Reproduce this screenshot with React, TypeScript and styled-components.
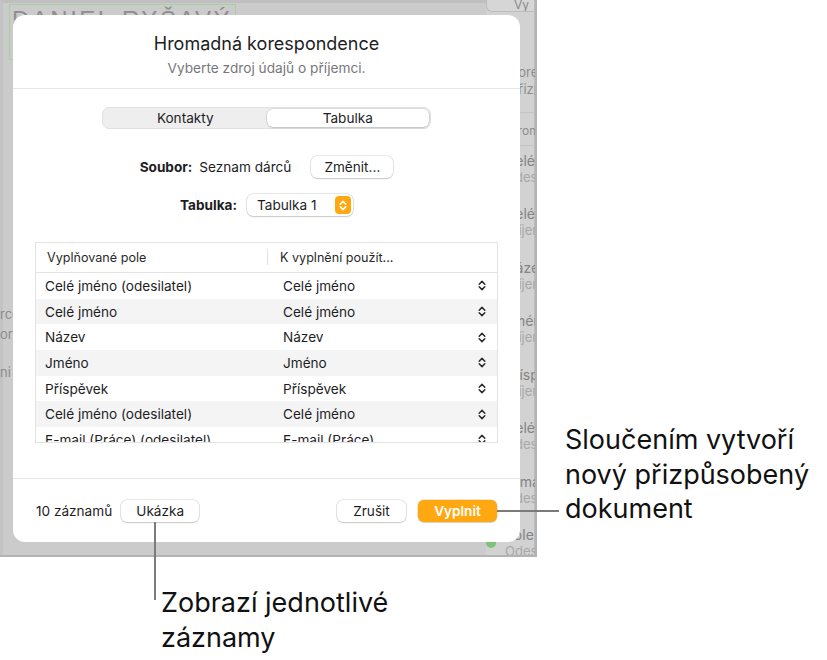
import React from "react";
import styled, { createGlobalStyle } from "styled-components";

const GlobalStyle = createGlobalStyle`
  html, body { margin: 0; padding: 0; background: #ffffff; }
  body { font-family: Inter, "Noto Sans", sans-serif; color: #1d1d1f; -webkit-font-smoothing: antialiased; }
  * { box-sizing: border-box; }
`;

const Root = styled.div`
  position: relative;
  width: 827px;
  height: 660px;
  overflow: hidden;
  background: #ffffff;
`;

const TopRow = styled.div`
  display: flex;
  align-items: flex-start;
`;

const Frame = styled.div`
  position: relative;
  flex: none;
  width: 537px;
  height: 557px;
  overflow: hidden;
  background: #cbcbcb;
  border-right: 2px solid #b3b3b3;
  border-bottom: 2px solid #b3b3b3;
`;

const BackApp = styled.div`
  display: grid;
  grid-template-columns: 1fr 49px;
  height: 100%;
  border-top: 3px solid #bfbfbf;
  border-left: 3px solid #c3c3c3;
`;

const Canvas = styled.div`
  display: flex;
  flex-direction: column;
  padding: 1px 0 0 6px;
`;

const NameBox = styled.div`
  width: 227px;
  height: 56px;
  border: 1px solid #a6cfa0;
  padding: 0 0 0 2px;
  font-family: "Liberation Sans", Arial, sans-serif;
  font-size: 24px;
  letter-spacing: 2.5px;
  line-height: 30px;
  color: #8e8e8e;
  white-space: nowrap;
  overflow: hidden;
`;

const DocLines = styled.div`
  margin: 247px 0 0 -9px;
  display: flex;
  flex-direction: column;
  gap: 6px;
  font-size: 13px;
  line-height: 14px;
  color: #8c8c8c;
`;

const DocLine = styled.div<{ $gap?: number }>`
  margin-top: ${(p) => p.$gap ?? 0}px;
  white-space: nowrap;
`;

const Sidebar = styled.div`
  display: flex;
  flex-direction: column;
  background: #d2d2d2;
  margin-top: -3px;
  border-right: 1px solid #bdbdbd;
`;

const SideTab = styled.div`
  height: 12px;
  background: #d6d6d6;
  border-left: 1px solid #bcbcbc;
  border-bottom: 1px solid #bcbcbc;
  border-bottom-left-radius: 6px;
  padding-left: 27px;
  font-size: 12px;
  line-height: 10px;
  color: #8a8a8a;
  overflow: hidden;
`;

const SideHead = styled.div`
  padding: 52px 0 14px 24px;
  font-size: 13px;
  line-height: 17px;
  color: #8c8c8c;
  white-space: nowrap;
  border-bottom: 1px solid #c4c4c4;
`;

const SideSection = styled.div`
  padding: 10px 0 7px 24px;
  font-size: 12px;
  line-height: 15px;
  color: #8c8c8c;
  white-space: nowrap;
  border-bottom: 1px solid #c4c4c4;
`;

const SideList = styled.div`
  display: flex;
  flex-direction: column;
  margin-top: -4px;
`;

const SideItem = styled.div`
  display: grid;
  grid-template-columns: 10px 1fr;
  column-gap: 9px;
  align-items: center;
  align-content: center;
  height: 53.5px;
  white-space: nowrap;
`;

const SideDot = styled.span<{ $color: string }>`
  width: 10px;
  height: 10px;
  border-radius: 50%;
  background: ${(p) => p.$color};
  grid-row: span 2;
`;

const SideTitle = styled.div`
  font-size: 14px;
  line-height: 17px;
  color: #848484;
`;

const SideSub = styled.div`
  font-size: 13px;
  line-height: 17px;
  color: #a8a8a8;
`;

const Dialog = styled.div`
  position: absolute;
  left: 13px;
  top: 15px;
  width: 507px;
  height: 527px;
  background: #ffffff;
  border-radius: 12px;
  display: flex;
  flex-direction: column;
  overflow: hidden;
`;

const Header = styled.div`
  padding: 17px 0 11px;
  text-align: center;
  border-bottom: 1px solid #e6e6e6;
`;

const Title = styled.div`
  font-size: 18px;
  line-height: 23px;
  color: #1d1d1f;
`;

const Subtitle = styled.div`
  margin-top: 5px;
  font-size: 13.7px;
  line-height: 17px;
  color: #77777b;
`;

const Body = styled.div`
  flex: 1;
  display: flex;
  flex-direction: column;
  align-items: center;
  padding: 18px 22px 0;
`;

const Segmented = styled.div`
  display: grid;
  grid-template-columns: 1fr 1fr;
  width: 329px;
  height: 22px;
  padding: 1px;
  border-radius: 7px;
  background: #eeeeef;
  border: 0.5px solid #e1e1e3;
`;

const Segment = styled.div<{ $active?: boolean }>`
  display: flex;
  align-items: center;
  justify-content: center;
  font-size: 13.6px;
  color: #1d1d1f;
  border-radius: 6px;
  background: ${(p) => (p.$active ? "#ffffff" : "transparent")};
  box-shadow: ${(p) =>
    p.$active ? "0 0 0 0.5px rgba(0,0,0,0.14), 0 1px 2px rgba(0,0,0,0.12)" : "none"};
`;

const FieldRow = styled.div<{ $top: number }>`
  display: flex;
  align-items: center;
  margin-top: ${(p) => p.$top}px;
  font-size: 13.6px;
`;

const Label = styled.span`
  font-weight: 700;
  color: #1d1d1f;
`;

const Value = styled.span`
  margin-left: 7px;
  color: #1d1d1f;
`;

const Button = styled.button<{ $primary?: boolean; $w: number }>`
  display: inline-flex;
  align-items: center;
  justify-content: center;
  width: ${(p) => p.$w}px;
  height: 22px;
  padding: 0;
  border: none;
  border-radius: 6px;
  font-family: inherit;
  font-size: 13.6px;
  font-weight: ${(p) => (p.$primary ? 600 : 400)};
  color: ${(p) => (p.$primary ? "#ffffff" : "#1d1d1f")};
  background: ${(p) => (p.$primary ? "#ffa812" : "#ffffff")};
  box-shadow: ${(p) =>
    p.$primary
      ? "0 0 0 0.5px rgba(200,120,0,0.4), 0 1px 1px rgba(0,0,0,0.1)"
      : "0 0 0 0.5px rgba(0,0,0,0.18), 0 1px 1.5px rgba(0,0,0,0.14)"};
`;

const Select = styled.div`
  display: flex;
  align-items: center;
  justify-content: space-between;
  width: 106px;
  height: 22px;
  margin-left: 10px;
  padding: 0 2px 0 10px;
  border-radius: 6px;
  background: #ffffff;
  box-shadow: 0 0 0 0.5px rgba(0,0,0,0.18), 0 1px 1.5px rgba(0,0,0,0.14);
  font-size: 13.6px;
`;

const Stepper = styled.span`
  display: flex;
  align-items: center;
  justify-content: center;
  width: 16px;
  height: 18px;
  border-radius: 4px;
  background: #ffa812;
`;

const Table = styled.div`
  align-self: stretch;
  margin-top: 26px;
  height: 201px;
  border: 1px solid #e3e3e3;
  overflow: hidden;
`;

const HeadRow = styled.div`
  display: grid;
  grid-template-columns: 232px 1fr;
  height: 30px;
  border-bottom: 1px solid #e3e3e3;
  font-size: 12.6px;
  color: #2a2a2a;
`;

const HeadCell = styled.div<{ $pad: number; $sep?: boolean }>`
  position: relative;
  display: flex;
  align-items: center;
  padding-left: ${(p) => p.$pad}px;
  &::before {
    content: "";
    display: ${(p) => (p.$sep ? "block" : "none")};
    position: absolute;
    left: -1px;
    top: 6px;
    width: 1px;
    height: 16px;
    background: #e0e0e0;
  }
`;

const Row = styled.div<{ $striped?: boolean }>`
  display: grid;
  grid-template-columns: 232px 1fr;
  height: 25.7px;
  align-items: center;
  font-size: 13.6px;
  color: #1d1d1f;
  background: ${(p) => (p.$striped ? "#f4f4f5" : "#ffffff")};
  white-space: nowrap;
`;

const Cell = styled.div`
  padding-left: 9px;
`;

const PopCell = styled.div`
  display: flex;
  align-items: center;
  justify-content: space-between;
  padding: 0 11px 0 15px;
`;

const Footer = styled.div`
  display: flex;
  align-items: center;
  height: 64px;
  padding: 0 23px;
  border-top: 1px solid #e6e6e6;
  font-size: 13.6px;
`;

const Count = styled.span`
  margin-right: 9px;
  color: #1d1d1f;
`;

const Spacer = styled.div`
  flex: 1;
`;

const ButtonGap = styled.div`
  width: 12px;
`;

const RightNote = styled.div`
  margin: 423px 0 0 28px;
  font-size: 27px;
  line-height: 34.5px;
  color: #111111;
  white-space: nowrap;
`;

const BottomNote = styled.div`
  margin: 29px 0 0 161px;
  font-size: 27px;
  line-height: 34.5px;
  color: #111111;
`;

const Leader = styled.div<{ $x: number; $y: number; $w: number; $h: number }>`
  position: absolute;
  left: ${(p) => p.$x}px;
  top: ${(p) => p.$y}px;
  width: ${(p) => p.$w}px;
  height: ${(p) => p.$h}px;
  background: #7b7b7b;
`;

const UpDown: React.FC<{ color: string; w?: number; h?: number; sw?: number }> = ({
  color,
  w = 8,
  h = 11,
  sw = 1.5,
}) => (
  <svg width={w} height={h} viewBox="0 0 8 11" fill="none">
    <path d="M1.2 4.2 L4 1.4 L6.8 4.2" stroke={color} strokeWidth={sw} strokeLinecap="round" strokeLinejoin="round" />
    <path d="M1.2 6.8 L4 9.6 L6.8 6.8" stroke={color} strokeWidth={sw} strokeLinecap="round" strokeLinejoin="round" />
  </svg>
);

const rows: [string, string][] = [
  ["Celé jméno (odesilatel)", "Celé jméno"],
  ["Celé jméno", "Celé jméno"],
  ["Název", "Název"],
  ["Jméno", "Jméno"],
  ["Příspěvek", "Příspěvek"],
  ["Celé jméno (odesilatel)", "Celé jméno"],
  ["E-mail (Práce) (odesilatel)", "E-mail (Práce)"],
];

const sideItems: [string, string, string][] = [
  ["Celé jméno", "Odesilatel", "transparent"],
  ["Celé jméno", "Příjemce", "transparent"],
  ["Název", "Příjemce", "transparent"],
  ["Jméno", "Příjemce", "transparent"],
  ["Příspěvek", "Příjemce", "transparent"],
  ["Celé jméno", "Odesilatel", "transparent"],
  ["E-mail", "Odesilatel", "transparent"],
  ["Pole", "Odesilatel", "#7cc47a"],
];

export default function App() {
  return (
    <Root>
      <GlobalStyle />
      <TopRow>
        <Frame>
          <BackApp>
            <Canvas>
              <NameBox>DANIEL RYŠAVÝ</NameBox>
              <DocLines>
                <DocLine>rce</DocLine>
                <DocLine>ory</DocLine>
                <DocLine $gap={18}>ni ı</DocLine>
              </DocLines>
            </Canvas>
            <Sidebar>
              <SideTab>Vy</SideTab>
              <SideHead>
                Korespondence
                <br />
                Přizpůsobit
              </SideHead>
              <SideSection>Proměnné</SideSection>
              <SideList>
                {sideItems.map(([t, s, c], i) => (
                  <SideItem key={i}>
                    <SideDot $color={c} />
                    <SideTitle>{t}</SideTitle>
                    <SideSub>{s}</SideSub>
                  </SideItem>
                ))}
              </SideList>
            </Sidebar>
          </BackApp>

          <Dialog>
            <Header>
              <Title>Hromadná korespondence</Title>
              <Subtitle>Vyberte zdroj údajů o příjemci.</Subtitle>
            </Header>
            <Body>
              <Segmented>
                <Segment>Kontakty</Segment>
                <Segment $active>Tabulka</Segment>
              </Segmented>
              <FieldRow $top={27}>
                <Label>Soubor:</Label>
                <Value>Seznam dárců</Value>
                <Button $w={82} style={{ marginLeft: 20 }}>
                  Změnit...
                </Button>
              </FieldRow>
              <FieldRow $top={16}>
                <Label>Tabulka:</Label>
                <Select>
                  <span>Tabulka 1</span>
                  <Stepper>
                    <UpDown color="#ffffff" w={8} h={11} sw={1.6} />
                  </Stepper>
                </Select>
              </FieldRow>
              <Table>
                <HeadRow>
                  <HeadCell $pad={11}>Vyplňované pole</HeadCell>
                  <HeadCell $pad={12} $sep>
                    K vyplnění použít...
                  </HeadCell>
                </HeadRow>
                {rows.map(([a, b], i) => (
                  <Row key={i} $striped={i % 2 === 1}>
                    <Cell>{a}</Cell>
                    <PopCell>
                      <span>{b}</span>
                      <UpDown color="#2b2b2b" />
                    </PopCell>
                  </Row>
                ))}
              </Table>
            </Body>
            <Footer>
              <Count>10 záznamů</Count>
              <Button $w={78}>Ukázka</Button>
              <Spacer />
              <Button $w={69}>Zrušit</Button>
              <ButtonGap />
              <Button $w={79} $primary>
                Vyplnit
              </Button>
            </Footer>
          </Dialog>
        </Frame>
        <RightNote>
          Sloučením vytvoří
          <br />
          nový přizpůsobený
          <br />
          dokument
        </RightNote>
      </TopRow>
      <BottomNote>
        Zobrazí jednotlivé
        <br />
        záznamy
      </BottomNote>
      <Leader $x={497} $y={510} $w={62} $h={2} />
      <Leader $x={154} $y={522} $w={2} $h={78} />
    </Root>
  );
}
